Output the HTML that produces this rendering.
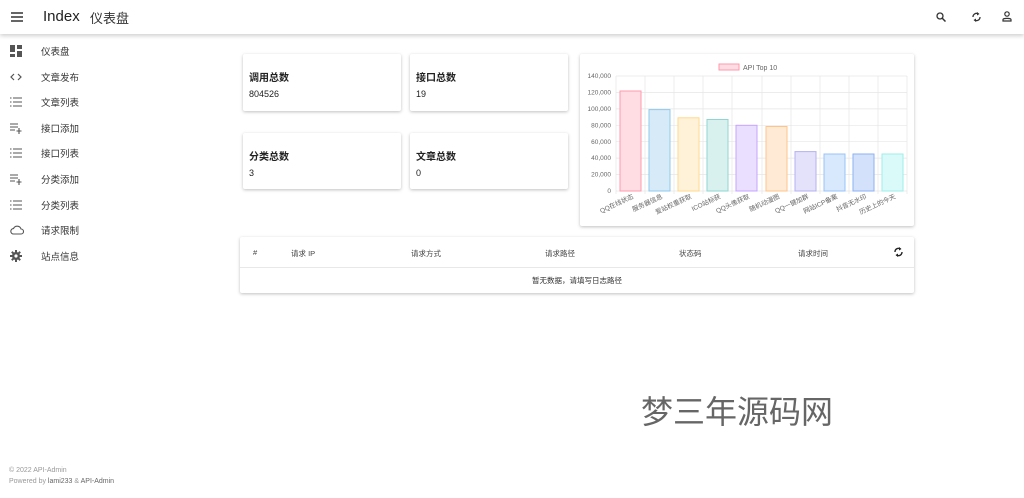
<!DOCTYPE html>
<html><head><meta charset="utf-8"><style>
*{margin:0;padding:0;box-sizing:border-box}
body{width:1024px;height:498px;overflow:hidden;background:#fff;font-family:"Liberation Sans","Noto Sans CJK SC",sans-serif;color:#222;position:relative}
.top{position:absolute;left:0;top:0;width:1024px;height:34px;background:#fff;box-shadow:0 2px 4px rgba(0,0,0,.18);z-index:2}
.top .t1{position:absolute;left:43px;top:8px;font-size:15px;color:#222}
.top .t2{position:absolute;left:90px;top:8px;font-size:13px;color:#333}
.side{position:absolute;left:0;top:38px;width:200px}
.side div{height:25.6px;position:relative;font-size:9.5px;color:#333}
.side div span{position:absolute;left:41px;top:6px}
.side svg{position:absolute;left:10px;top:7px}
.card{position:absolute;background:#fff;box-shadow:0 1px 3px rgba(0,0,0,.25);border-radius:2px}
.card b{position:absolute;left:6px;top:15px;font-size:10px}
.card i{position:absolute;left:6px;top:35px;font-size:9px;font-style:normal}
.th{position:absolute;top:11px;font-size:7.5px;color:#444}
.foot{position:absolute;left:9px;font-size:7px;color:#999}
</style></head><body>
<div class="top">
<svg style="position:absolute;left:11px;top:12px" width="12" height="10"><path d="M0 1h12M0 5h12M0 9h12" stroke="#333" stroke-width="1.6"/></svg>
<span class="t1">Index</span><span class="t2">仪表盘</span>
<svg style="position:absolute;left:936px;top:12px" width="10" height="10"><circle cx="4" cy="4" r="3" fill="none" stroke="#333" stroke-width="1.3"/><path d="M6 6l3.5 3.5" stroke="#333" stroke-width="1.5"/></svg>
<svg style="position:absolute;left:971px;top:11px" width="11" height="12"><path d="M2 6a3.5 3.5 0 0 1 5.5-3M9 6a3.5 3.5 0 0 1-5.5 3" fill="none" stroke="#333" stroke-width="1.3"/><path d="M6 1l2.5 2-2.5 1.5zM5 11l-2.5-2 2.5-1.5z" fill="#333"/></svg>
<svg style="position:absolute;left:1002px;top:11px" width="10" height="11"><circle cx="5" cy="3" r="2.2" fill="none" stroke="#333" stroke-width="1.2"/><path d="M1 10V8.5C1 7 9 7 9 8.5V10z" fill="none" stroke="#333" stroke-width="1.2"/></svg>
</div>
<div class="side">
<div><svg width="12" height="12"><path d="M0 0h5v7H0zM7 0h5v4H7zM7 6h5v6H7zM0 9h5v3H0z" fill="#555"/></svg><span>仪表盘</span></div>
<div><svg width="12" height="12"><path d="M4 3L1 6l3 3M8 3l3 3-3 3" fill="none" stroke="#555" stroke-width="1.2"/></svg><span>文章发布</span></div>
<div><svg width="12" height="12"><path d="M0 2h1.5M3 2h9M0 6h1.5M3 6h9M0 10h1.5M3 10h9" stroke="#555" stroke-width="1.1"/></svg><span>文章列表</span></div>
<div><svg width="13" height="12"><path d="M0 2h8M0 5h8M0 8h5M9 6v6M6.5 9h5" stroke="#555" stroke-width="1.1"/></svg><span>接口添加</span></div>
<div><svg width="12" height="12"><path d="M0 2h1.5M3 2h9M0 6h1.5M3 6h9M0 10h1.5M3 10h9" stroke="#555" stroke-width="1.1"/></svg><span>接口列表</span></div>
<div><svg width="13" height="12"><path d="M0 2h8M0 5h8M0 8h5M9 6v6M6.5 9h5" stroke="#555" stroke-width="1.1"/></svg><span>分类添加</span></div>
<div><svg width="12" height="12"><path d="M0 2h1.5M3 2h9M0 6h1.5M3 6h9M0 10h1.5M3 10h9" stroke="#555" stroke-width="1.1"/></svg><span>分类列表</span></div>
<div><svg width="14" height="12"><path d="M3.5 10a2.7 2.7 0 0 1 0-5.4A4 4 0 0 1 11 5a2.5 2.5 0 0 1 0 5z" fill="none" stroke="#555" stroke-width="1.1"/></svg><span>请求限制</span></div>
<div><svg width="12" height="12"><circle cx="6" cy="6" r="4" fill="#555"/><path d="M6 0v12M0 6h12M1.8 1.8l8.4 8.4M10.2 1.8l-8.4 8.4" stroke="#555" stroke-width="2"/><circle cx="6" cy="6" r="1.6" fill="#fff"/></svg><span>站点信息</span></div>
</div>
<div class="card" style="left:243px;top:54px;width:158px;height:57px"><b>调用总数</b><i>804526</i></div>
<div class="card" style="left:410px;top:54px;width:158px;height:57px"><b>接口总数</b><i>19</i></div>
<div class="card" style="left:243px;top:133px;width:158px;height:56px"><b>分类总数</b><i>3</i></div>
<div class="card" style="left:410px;top:133px;width:158px;height:56px"><b>文章总数</b><i>0</i></div>
<div class="card" style="left:580px;top:54px;width:334px;height:172px"></div>
<svg style="position:absolute;left:580px;top:54px" width="334" height="172" font-family="Liberation Sans,Noto Sans CJK SC,sans-serif">
<rect x="139" y="10" width="20" height="6" fill="#ffdde3" stroke="#ff99ad"/>
<text x="163" y="16" font-size="7" fill="#666">API Top 10</text>
<g stroke="#e6e6e6" stroke-width="0.7">
<path d="M36 22H327M36 38.4H327M36 54.9H327M36 71.3H327M36 87.7H327M36 104.1H327M36 120.6H327M36 137H327"/>
<path d="M36 22V140M65 22V140M94 22V140M123 22V140M152 22V140M182 22V140M211 22V140M240 22V140M269 22V140M298 22V140M327 22V140"/>
</g>
<g font-size="6.5" fill="#666" text-anchor="end">
<text x="31" y="24">140,000</text><text x="31" y="40.5">120,000</text><text x="31" y="57">100,000</text><text x="31" y="73.5">80,000</text><text x="31" y="90">60,000</text><text x="31" y="106">40,000</text><text x="31" y="122.5">20,000</text><text x="31" y="139">0</text>
</g>
<g stroke-width="1">
<rect x="40" y="37" width="21" height="100" fill="#ffdde3" stroke="#ff9aae"/>
<rect x="69" y="55.6" width="21" height="81.4" fill="#d6eaf8" stroke="#8ec9ee"/>
<rect x="98" y="63.8" width="21" height="73.2" fill="#fff2d9" stroke="#ffd98a"/>
<rect x="127" y="65.5" width="21" height="71.5" fill="#d8f1ef" stroke="#8fd6d2"/>
<rect x="156" y="71.3" width="21" height="65.7" fill="#ebdfff" stroke="#c3a4ff"/>
<rect x="186" y="72.5" width="21" height="64.5" fill="#ffead6" stroke="#ffc48a"/>
<rect x="215" y="97.6" width="21" height="39.4" fill="#e4e2fa" stroke="#b5b0f0"/>
<rect x="244" y="100" width="21" height="37" fill="#d8e8fd" stroke="#98c3fa"/>
<rect x="273" y="100" width="21" height="37" fill="#d3e1fb" stroke="#8eb2f5"/>
<rect x="302" y="100" width="21" height="37" fill="#d9faf8" stroke="#9eeeea"/>
</g>
<g font-size="6.5" fill="#666" text-anchor="end">
<text transform="translate(54,144) rotate(-25)">QQ在线状态</text>
<text transform="translate(83,144) rotate(-25)">服务器信息</text>
<text transform="translate(112,144) rotate(-25)">爱站权重获取</text>
<text transform="translate(141,144) rotate(-25)">ICO站标获</text>
<text transform="translate(170,144) rotate(-25)">QQ头像获取</text>
<text transform="translate(200,144) rotate(-25)">随机动漫图</text>
<text transform="translate(229,144) rotate(-25)">QQ一键加群</text>
<text transform="translate(258,144) rotate(-25)">网站ICP备案</text>
<text transform="translate(287,144) rotate(-25)">抖音无水印</text>
<text transform="translate(316,144) rotate(-25)">历史上的今天</text>
</g>
</svg>
<div class="card" style="left:240px;top:237px;width:674px;height:56px">
<span class="th" style="left:13px">#</span><span class="th" style="left:51px">请求 IP</span><span class="th" style="left:171px">请求方式</span><span class="th" style="left:305px">请求路径</span><span class="th" style="left:439px">状态码</span><span class="th" style="left:558px">请求时间</span>
<svg style="position:absolute;left:653px;top:9px" width="11" height="12"><path d="M2 6a3.5 3.5 0 0 1 5.5-3M9 6a3.5 3.5 0 0 1-5.5 3" fill="none" stroke="#222" stroke-width="1.4"/><path d="M6 1l2.5 2-2.5 1.5zM5 11l-2.5-2 2.5-1.5z" fill="#222"/></svg>
<div style="position:absolute;left:0;right:0;top:30px;border-top:1px solid #e8e8e8"></div>
<span class="th" style="left:0;right:0;text-align:center;top:38px;color:#333">暂无数据，请填写日志路径</span>
</div>
<div style="position:absolute;left:641px;top:388px;font-size:32px;color:#666;font-family:'Noto Sans CJK SC',sans-serif;font-weight:400;line-height:44px">梦三年源码网</div>
<div class="foot" style="top:467px">© 2022 API-Admin</div>
<div class="foot" style="top:478px">Powered by <span style="color:#666">lami233</span> &amp; <span style="color:#666">API-Admin</span></div>
</body></html>
